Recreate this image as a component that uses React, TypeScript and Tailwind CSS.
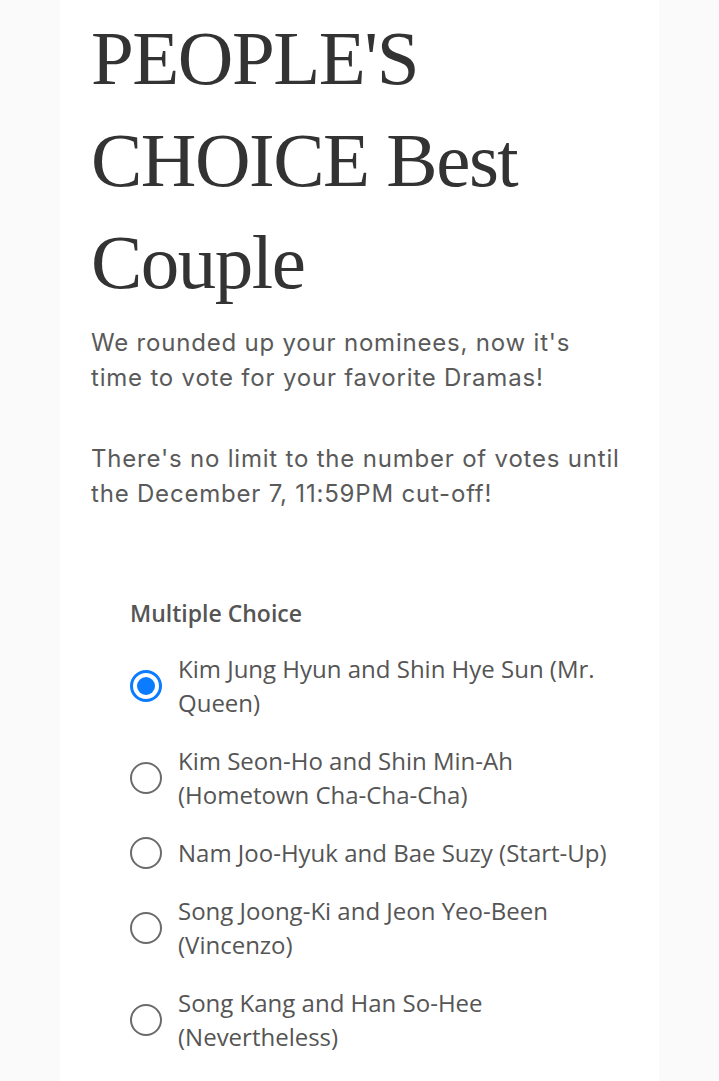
import React from "react";

const options = [
  "Kim Jung Hyun and Shin Hye Sun (Mr. Queen)",
  "Kim Seon-Ho and Shin Min-Ah (Hometown Cha-Cha-Cha)",
  "Nam Joo-Hyuk and Bae Suzy (Start-Up)",
  "Song Joong-Ki and Jeon Yeo-Been (Vincenzo)",
  "Song Kang and Han So-Hee (Nevertheless)",
];

export default function App() {
  return (
    <div className="min-h-[1081px] w-full bg-[#fafafa]">
      <div className="mx-[60px] min-h-[1081px] bg-white px-[31px] pt-[7px] pb-10">
        <h1 className="m-0 text-[77px] leading-[102px] tracking-[-1.5px] text-[#333333] font-normal [font-family:'Liberation_Serif',serif]">
          PEOPLE'S CHOICE Best Couple
        </h1>
        <div className="mt-[12px] whitespace-nowrap text-[24px] leading-[35px] text-[#5a5a5a] [font-family:Inter,'Noto_Sans',sans-serif] tracking-[0.8px]">
          <p>
            We rounded up your nominees, now it's
            <br />
            time to vote for your favorite Dramas!
          </p>
          <p className="mt-[46px]">
            There's no limit to the number of votes until
            <br />
            the December 7, 11:59PM cut-off!
          </p>
        </div>
        <div className="mt-[85px] pl-[39px] [font-family:'Open_Sans',sans-serif] text-[#555555]">
          <div className="text-[23px] leading-[34px] font-semibold">Multiple Choice</div>
          <div className="mt-[22px] flex flex-col gap-[24px]">
            {options.map((o, i) => (
              <label key={i} className="flex items-center gap-[16px]">
                {i === 0 ? (
                  <span className="flex h-[32px] w-[32px] shrink-0 items-center justify-center rounded-full border-[3px] border-[#0b7bff]">
                    <span className="h-[18px] w-[18px] rounded-full bg-[#0b7bff]" />
                  </span>
                ) : (
                  <span className="h-[32px] w-[32px] shrink-0 rounded-full border-2 border-[#6b6b6b]" />
                )}
                <span className="text-[24px] leading-[34px]">{o}</span>
              </label>
            ))}
          </div>
        </div>
      </div>
    </div>
  );
}
